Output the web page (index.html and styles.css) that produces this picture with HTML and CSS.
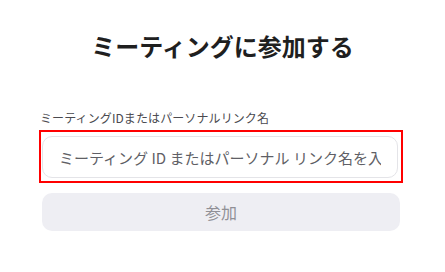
FILE: index.html
```html
<!DOCTYPE html>
<html lang="ja">
<head>
<meta charset="utf-8">
<link rel="stylesheet" href="styles.css">
</head>
<body>
<main class="page">
  <h1 class="title">ミーティングに参加する</h1>
  <div class="form">
    <label class="label" for="mid">ミーティングIDまたはパーソナルリンク名</label>
    <div class="highlight">
      <input id="mid" class="input" type="text" placeholder="ミーティング ID またはパーソナル リンク名を入力">
    </div>
    <button class="join" type="button">参加</button>
  </div>
</main>
</body>
</html>
```

FILE: styles.css
```css
* { box-sizing: border-box; }
html, body { margin: 0; padding: 0; background: #ffffff; }
body {
  font-family: "Noto Sans CJK JP", "Noto Sans", sans-serif;
  width: 445px;
  height: 272px;
  overflow: hidden;
}
.page {
  display: flex;
  flex-direction: column;
}
.title {
  margin: 29px 0 0 0;
  font-size: 24px;
  line-height: 34px;
  font-weight: 700;
  color: #1f1f1f;
  text-align: center;
}
.form {
  margin: 47px 0 0 39px;
  width: 364px;
  display: flex;
  flex-direction: column;
}
.label {
  display: block;
  padding-left: 1px;
  font-size: 12px;
  line-height: 16px;
  letter-spacing: 0.1px;
  color: #4a4a4f;
  white-space: nowrap;
}
.highlight {
  margin-top: 4px;
  border: 2px solid #ff0000;
  padding: 4px 3px 3px 1px;
  display: flex;
}
.input {
  width: 356px;
  height: 42px;
  border: 1px solid #e4e4e8;
  border-radius: 10px;
  padding: 0 16px;
  font-family: inherit;
  font-size: 15px;
  color: #222;
  background: #ffffff;
  outline: none;
}
.input::placeholder { color: #5f5f66; opacity: 1; }
.join {
  margin: 10px 0 0 3px;
  width: 358px;
  height: 38px;
  border: none;
  border-radius: 10px;
  background: #eeeef3;
  color: #909096;
  font-family: inherit;
  font-size: 16px;
  padding: 0;
}
```
